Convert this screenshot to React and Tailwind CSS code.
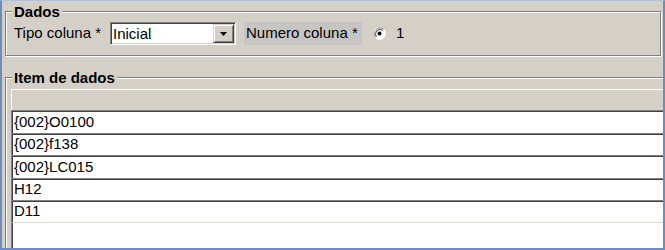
import React from 'react';

const rows = [
  { text: '{002}O0100', h: 'h-[23px]' },
  { text: '{002}f138', h: 'h-[22px]' },
  { text: '{002}LC015', h: 'h-[23px]' },
  { text: 'H12', h: 'h-[22px]' },
  { text: 'D11', h: 'h-[22px]' },
];

const Radio = () => (
  <svg width="13" height="13" viewBox="0 0 13 13">
    <circle cx="6.5" cy="6.5" r="6" fill="#fff" stroke="#ffffff" />
    <path d="M2.3 10.7 A6 6 0 0 1 10.7 2.3" fill="none" stroke="#808080" strokeWidth="1" />
    <path d="M3.3 9.7 A4.6 4.6 0 0 1 9.7 3.3" fill="none" stroke="#404040" strokeWidth="1" />
    <circle cx="6.5" cy="6.5" r="2" fill="#000" />
  </svg>
);

const DropButton = () => (
  <div className="w-[21px] h-full flex items-center justify-center bg-[#d4d0c8] border border-t-[#d4d0c8] border-l-[#d4d0c8] border-b-[#404040] border-r-[#404040] shadow-[inset_1px_1px_0_#fff,inset_-1px_-1px_0_#808080]">
    <svg width="7" height="4" viewBox="0 0 7 4">
      <polygon points="0,0 7,0 3.5,4" fill="#000" />
    </svg>
  </div>
);

export default function App() {
  return (
    <div className="w-[665px] h-[250px] overflow-hidden flex flex-col bg-[#d4d0c8] border-x-2 border-b-2 border-t border-[#6d8dc0] border-t-[#b4c2d6] font-['Liberation_Sans',Arial,sans-serif] text-[15px] text-black">
      {/* Dados */}
      <fieldset className="mt-[2px] ml-[3px] mr-[2px] pl-[8px] pt-[2px] pb-[10px] border border-[#808080] shadow-[inset_1px_1px_0_#fff,1px_1px_0_#fff]">
        <legend className="-ml-[2px] px-[2px] bg-[#d4d0c8] font-bold leading-[17px]">Dados</legend>
        <div className="flex items-center h-[23px]">
          <span className="w-[96px]">Tipo coluna *</span>
          <div className="w-[126px] h-[23px] flex p-[1px] bg-white border border-t-[#808080] border-l-[#808080] border-b-white border-r-white shadow-[inset_1px_1px_0_#404040,inset_-1px_-1px_0_#d4d0c8]">
            <span className="flex-1 pl-[1px] leading-[19px]">Inicial</span>
            <DropButton />
          </div>
          <div className="ml-[8px] w-[118px] h-[23px] pl-[2px] flex items-center bg-[#c7c5c4]">Numero coluna *</div>
          <div className="ml-[11px] flex items-center">
            <Radio />
          </div>
          <span className="ml-[10px]">1</span>
        </div>
      </fieldset>

      {/* Item de dados */}
      <fieldset className="mt-[13px] ml-[3px] flex-1 min-h-0 flex flex-col pl-[5px] pt-[3px] border-t border-l border-[#808080] shadow-[inset_1px_1px_0_#fff]">
        <legend className="ml-[1px] px-[2px] bg-[#d4d0c8] font-bold leading-[17px]">Item de dados</legend>
        <div className="h-[21px] border-t border-l border-white bg-[#d4d0c8]" />
        <div className="flex-1 flex flex-col bg-white border-l border-[#808080] shadow-[inset_1px_0_0_#404040]">
          {rows.map((r) => (
            <div
              key={r.text}
              className={`${r.h} flex items-center pl-[2px] border-t border-[#808080] shadow-[inset_0_1px_0_#404040]`}
            >
              {r.text}
            </div>
          ))}
          <div className="flex-1 border-t border-[#d8d5cf]" />
        </div>
      </fieldset>
    </div>
  );
}
